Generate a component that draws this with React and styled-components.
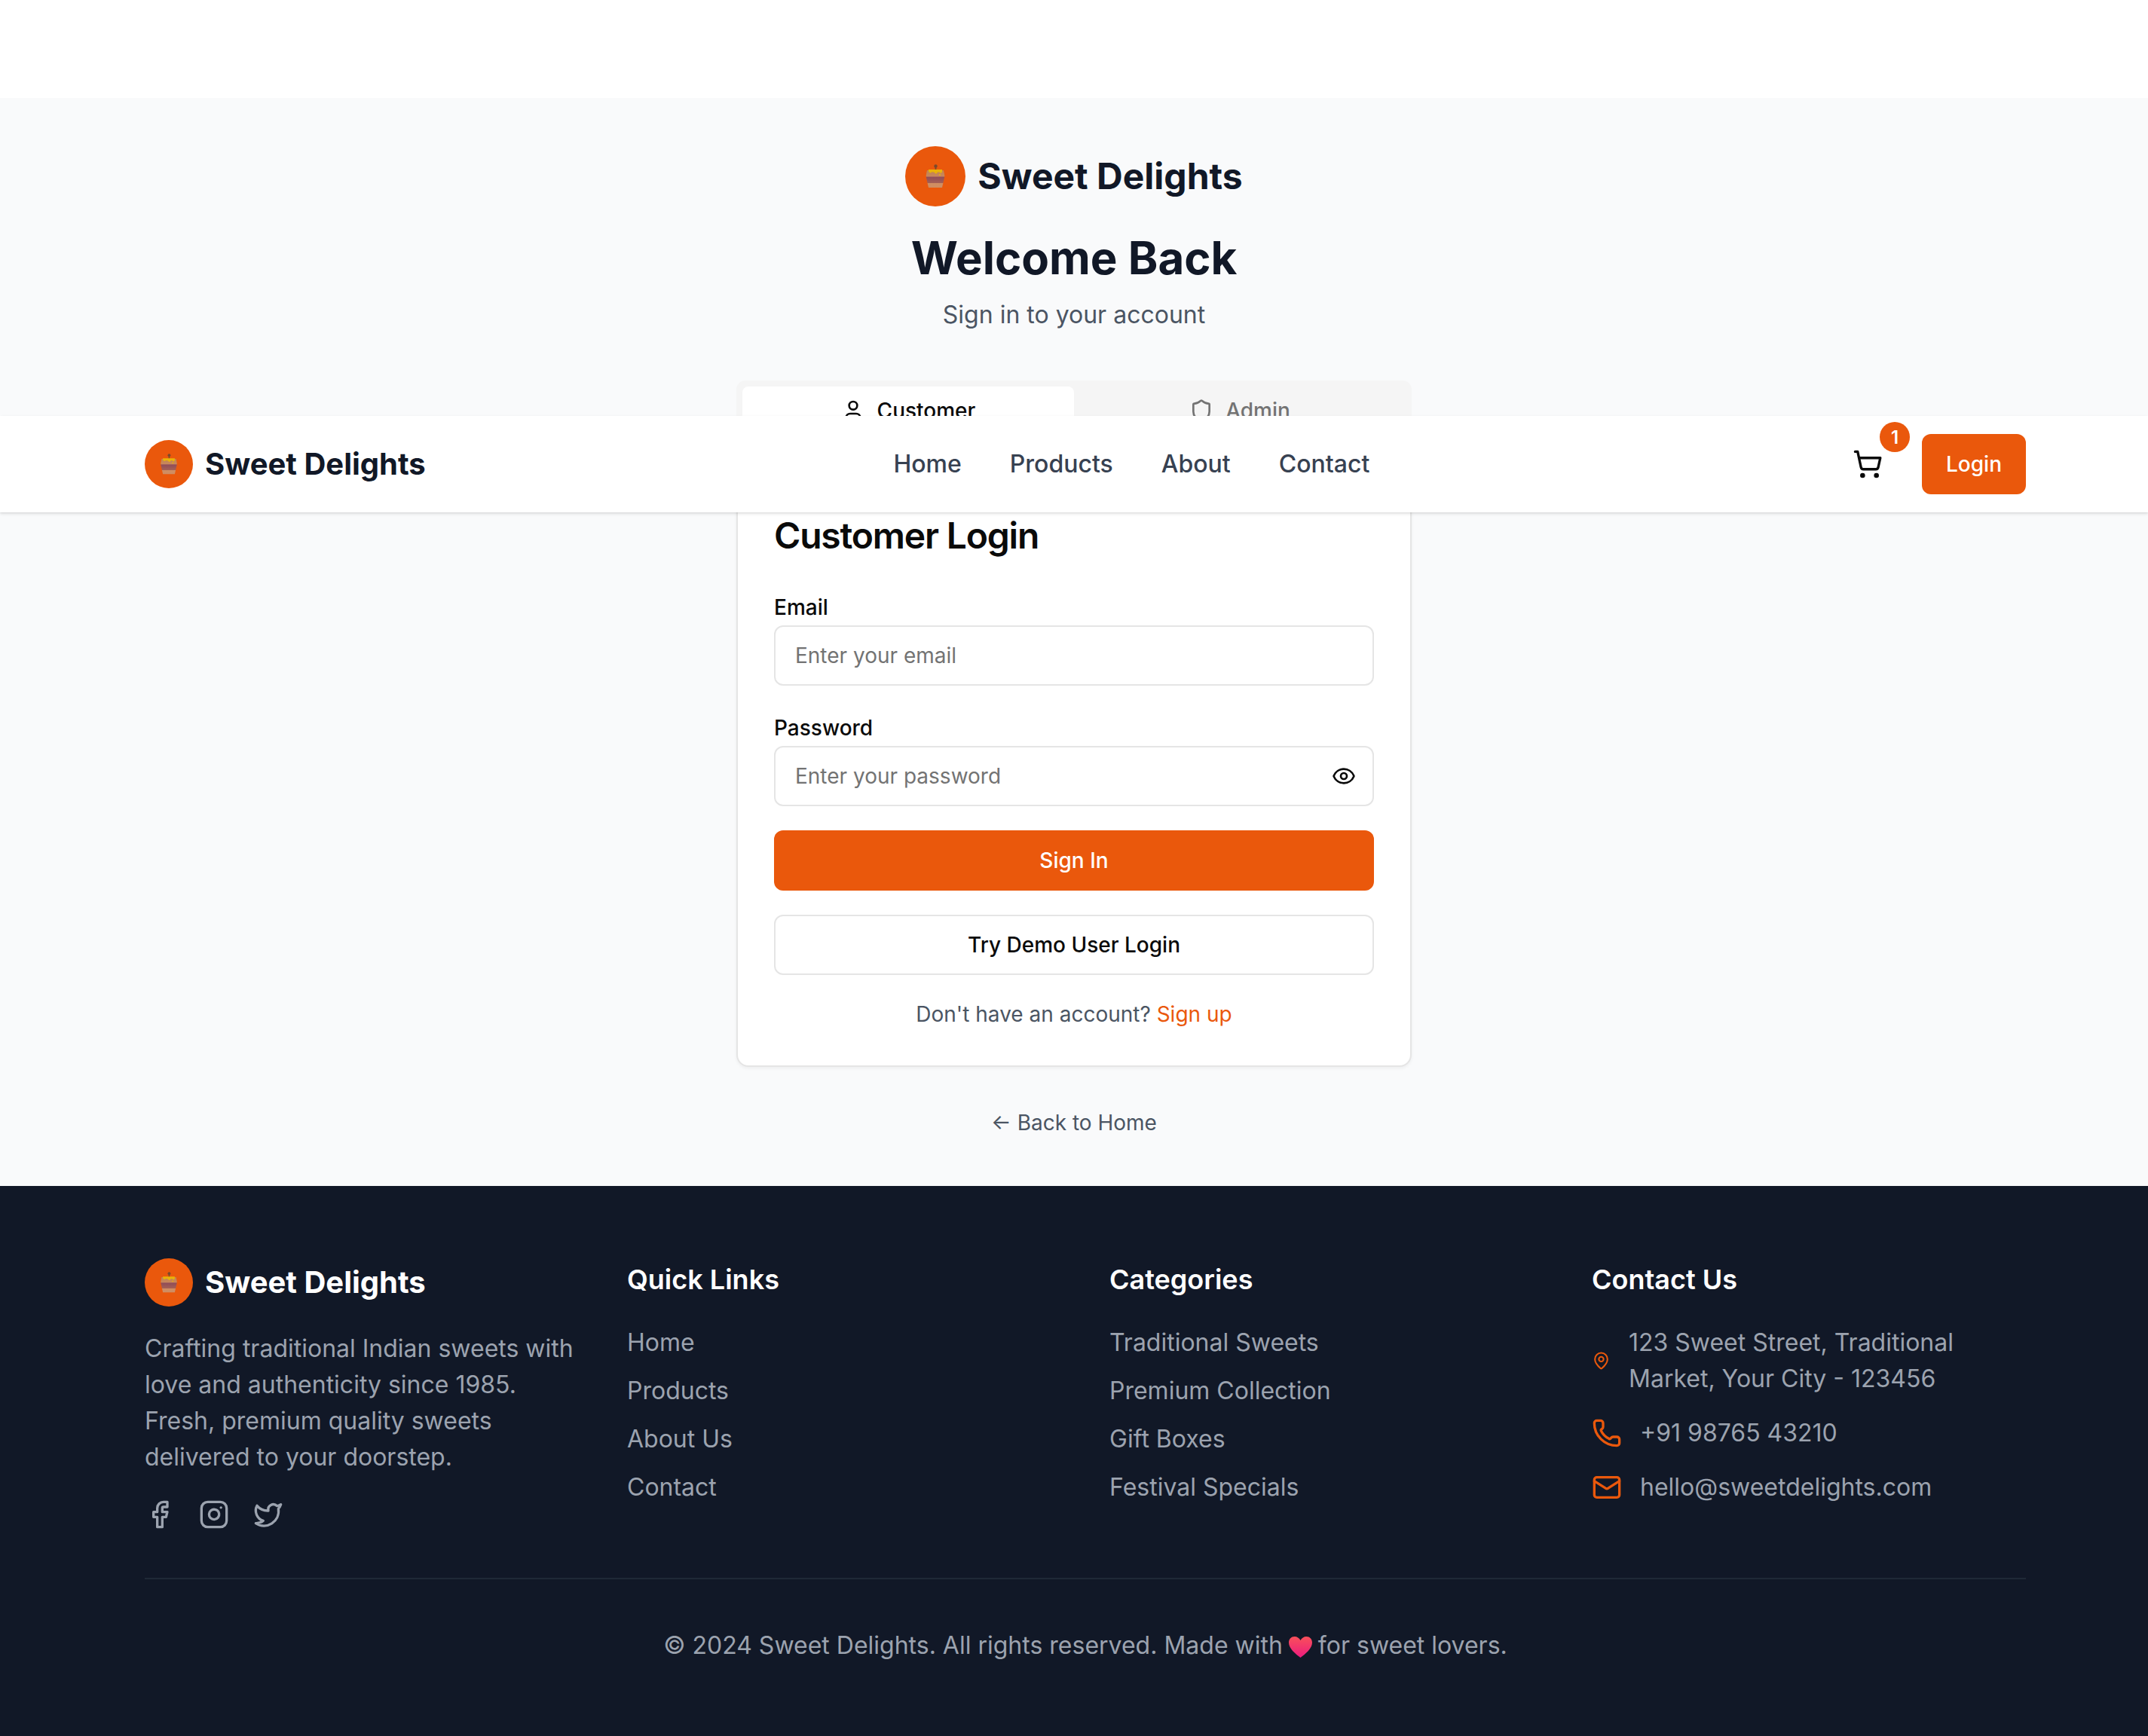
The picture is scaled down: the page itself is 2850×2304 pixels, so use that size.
import React from 'react';
import styled, { createGlobalStyle } from 'styled-components';
import { User, Shield, ShoppingCart, Eye, Facebook, Instagram, Twitter, MapPin, Phone, Mail } from 'lucide-react';

const Global = createGlobalStyle`
  * { box-sizing: border-box; }
  html, body { margin: 0; padding: 0; background: #fff; }
  body { font-family: Inter, "Noto Sans", sans-serif; color: #0a0a0a; }
  input::placeholder { color: #737373; opacity: 1; }
`;

const Page = styled.div`position: relative; padding-top: 130px; width: 2850px;`;

const NavBar = styled.nav`
  position: absolute; top: 552px; left: 0; right: 0; height: 128px; z-index: 10;
  background: #fff; box-shadow: 0 2px 4px rgba(0,0,0,.1), 0 1px 2px rgba(0,0,0,.06);
  padding: 0 162px 0 192px; display: flex; align-items: center; justify-content: space-between;
`;
const NavLinks = styled.div`display: flex; gap: 64px;`;
const NavLink = styled.a`font-size: 32px; line-height: 48px; font-weight: 500; color: #374151;`;
const NavRight = styled.div`display: flex; align-items: center; gap: 32px;`;
const CartButton = styled.div`position: relative; width: 80px; height: 80px; display: flex; align-items: center; justify-content: center; color: #0a0a0a;`;
const Badge = styled.span`
  position: absolute; top: -16px; right: -16px; width: 40px; height: 40px; border-radius: 50%;
  background: #ea580c; color: #fff; font-size: 24px; font-weight: 600; display: flex; align-items: center; justify-content: center;
`;
const LoginButton = styled.button`
  height: 80px; padding: 0 32px; border: 0; border-radius: 12px; background: #ea580c; color: #fff;
  font: 500 28px/40px Inter, sans-serif;
`;

const BrandRow = styled.div`display: flex; align-items: center; gap: 16px; justify-content: ${p => p.$center ? 'center' : 'flex-start'};`;
const LogoCircle = styled.div`
  width: ${p => p.$size}px; height: ${p => p.$size}px; border-radius: 50%; background: #ea580c; flex: none;
  display: flex; align-items: center; justify-content: center;
`;
const BrandName = styled.span`font-weight: 700; font-size: ${p => p.$size}px; line-height: ${p => p.$line}px; color: ${p => p.$light ? '#fff' : '#111827'};`;

const Main = styled.main`background: #f9fafb; height: 1444px; padding-top: 64px;`;
const Title = styled.h1`margin: 32px 0 0; text-align: center; font-size: 60px; line-height: 72px; font-weight: 700; color: #111827;`;
const Subtitle = styled.p`margin: 16px 0 0; text-align: center; font-size: 32px; line-height: 48px; color: #4b5563;`;
const Column = styled.div`width: 896px; margin: 63px auto 0;`;
const Tabs = styled.div`height: 80px; padding: 8px; border-radius: 12px; background: #f5f5f5; display: grid; grid-template-columns: 1fr 1fr;`;
const Tab = styled.div`
  height: 64px; border-radius: 8px; display: flex; align-items: center; justify-content: center; gap: 16px;
  font-size: 28px; line-height: 40px; font-weight: 500;
  background: ${p => p.$active ? '#fff' : 'transparent'}; color: ${p => p.$active ? '#0a0a0a' : '#737373'};
`;
const Card = styled.section`
  margin-top: 48px; padding: 50px 48px 48px; background: #fff; border: 2px solid #e5e5e5; border-radius: 16px;
  box-shadow: 0 2px 4px rgba(0,0,0,.05);
`;
const CardTitle = styled.h2`margin: 0 0 53px; font-size: 48px; line-height: 52px; font-weight: 600; letter-spacing: -1.2px; color: #0a0a0a;`;
const Field = styled.div`margin-bottom: ${p => p.$mb}px;`;
const Label = styled.label`display: block; margin-bottom: 8px; font-size: 28px; line-height: 32px; font-weight: 500; color: #0a0a0a;`;
const InputWrap = styled.div`position: relative;`;
const Input = styled.input`
  display: block; width: 100%; height: 80px; padding: 0 26px; border: 2px solid #e5e5e5; border-radius: 12px; background: #fff;
  font: 400 28px/40px Inter, sans-serif; color: #0a0a0a; outline: 0;
`;
const EyeSlot = styled.span`position: absolute; right: 24px; top: 24px; width: 32px; height: 32px; color: #0a0a0a; display: flex;`;
const Primary = styled.button`
  display: block; width: 100%; height: 80px; border: 0; border-radius: 12px; background: #ea580c; color: #fff;
  font: 500 28px/40px Inter, sans-serif;
`;
const Outline = styled.button`
  display: block; width: 100%; height: 80px; margin-top: 32px; border: 2px solid #e5e5e5; border-radius: 12px; background: #fff; color: #0a0a0a;
  font: 500 28px/40px Inter, sans-serif;
`;
const SignupLine = styled.p`margin: 32px 0 0; text-align: center; font-size: 28px; line-height: 40px; color: #4b5563;`;
const Accent = styled.a`color: #ea580c;`;
const BackLine = styled.p`margin: 54px 0 0; text-align: center; font-size: 28px; line-height: 40px; color: #4b5563;`;

const Footer = styled.footer`background: #111827; height: 730px; padding: 96px 162px 0 192px;`;
const FooterGrid = styled.div`display: grid; grid-template-columns: repeat(4, 576px); gap: 64px; height: 360px;`;
const FooterText = styled.p`margin: 32px 0 0; font-size: 32px; line-height: 48px; color: #9ca3af;`;
const Socials = styled.div`display: flex; gap: 32px; margin-top: 32px; color: #9ca3af;`;
const FooterHeading = styled.h3`margin: 0 0 32px; font-size: 36px; line-height: 56px; font-weight: 600; color: #fff;`;
const LinkList = styled.ul`list-style: none; margin: 0; padding: 0; display: flex; flex-direction: column; gap: 16px;`;
const FooterLink = styled.li`font-size: 32px; line-height: 48px; color: #9ca3af;`;
const ContactList = styled.div`display: flex; flex-direction: column; gap: 24px;`;
const ContactRow = styled.div`display: flex; align-items: center; gap: 24px; font-size: 32px; line-height: 48px; color: #9ca3af;`;
const PinIcon = styled(MapPin)`width: 25px; height: 40px; flex: none; color: #ea580c;`;
const Copyright = styled.div`
  margin-top: 64px; border-top: 2px solid #1f2937; padding-top: 64px; text-align: center; font-size: 32px; line-height: 48px; color: #9ca3af;
`;
const HeartIcon = styled.svg`display: inline-block; width: 33px; height: 29px; margin: 0 7px; vertical-align: -5px;`;

const Pot = ({ size, id }) => (
  <svg width={size} height={size} viewBox="0 0 32 32" aria-hidden="true">
    <defs>
      <linearGradient id={id} x1="0" y1="0" x2="0" y2="1">
        <stop offset="0" stopColor="#c2844f" />
        <stop offset=".36" stopColor="#c9875d" />
        <stop offset=".38" stopColor="#8f4c58" />
        <stop offset=".72" stopColor="#a35f56" />
        <stop offset=".74" stopColor="#d08e62" />
        <stop offset="1" stopColor="#cf8d62" />
      </linearGradient>
    </defs>
    <path d="M5 8 H27 L28 13 Q29 16 27.5 20 L25 31 H7 L4.5 20 Q3 16 4 13 Z" fill={`url(#${id})`} />
    <circle cx="16.5" cy="2.5" r="2.2" fill="#7a4a2c" />
    <rect x="15.6" y="3" width="1.8" height="5" fill="#7a4a2c" />
    <path d="M7 7 H25 V10 Q24 13 22 11 Q20 9.5 18.5 11 Q17 14 15 11 Q12 9.5 9.5 11.5 Q7.5 11 7 9 Z" fill="#eab308" />
    <circle cx="22" cy="14" r="1" fill="#eab308" />
  </svg>
);

const Brand = ({ circle, pot, size, line, light, center, id }) => (
  <BrandRow $center={center}>
    <LogoCircle $size={circle}><Pot size={pot} id={id} /></LogoCircle>
    <BrandName $size={size} $line={line} $light={light}>Sweet Delights</BrandName>
  </BrandRow>
);

export default function App() {
  return (
    <Page>
      <Global />
      <NavBar>
        <Brand circle={64} pot={28} size={40} line={56} id="pot-nav" />
        <NavLinks>
          <NavLink>Home</NavLink>
          <NavLink>Products</NavLink>
          <NavLink>About</NavLink>
          <NavLink>Contact</NavLink>
        </NavLinks>
        <NavRight>
          <CartButton>
            <ShoppingCart size={40} />
            <Badge>1</Badge>
          </CartButton>
          <LoginButton>Login</LoginButton>
        </NavRight>
      </NavBar>
      <Main>
        <Brand circle={80} pot={32} size={48} line={64} center id="pot-main" />
        <Title>Welcome Back</Title>
        <Subtitle>Sign in to your account</Subtitle>
        <Column>
          <Tabs>
            <Tab $active><User size={32} />Customer</Tab>
            <Tab><Shield size={32} />Admin</Tab>
          </Tabs>
          <Card>
            <CardTitle>Customer Login</CardTitle>
            <Field $mb={40}>
              <Label>Email</Label>
              <Input placeholder="Enter your email" />
            </Field>
            <Field $mb={32}>
              <Label>Password</Label>
              <InputWrap>
                <Input placeholder="Enter your password" />
                <EyeSlot><Eye size={32} /></EyeSlot>
              </InputWrap>
            </Field>
            <Primary>Sign In</Primary>
            <Outline>Try Demo User Login</Outline>
            <SignupLine>Don't have an account? <Accent>Sign up</Accent></SignupLine>
          </Card>
          <BackLine>← Back to Home</BackLine>
        </Column>
      </Main>
      <Footer>
        <FooterGrid>
          <div>
            <Brand circle={64} pot={28} size={40} line={56} light id="pot-foot" />
            <FooterText>Crafting traditional Indian sweets with love and authenticity since 1985. Fresh, premium quality sweets delivered to your doorstep.</FooterText>
            <Socials>
              <Facebook size={40} />
              <Instagram size={40} />
              <Twitter size={40} />
            </Socials>
          </div>
          <div>
            <FooterHeading>Quick Links</FooterHeading>
            <LinkList>
              <FooterLink>Home</FooterLink>
              <FooterLink>Products</FooterLink>
              <FooterLink>About Us</FooterLink>
              <FooterLink>Contact</FooterLink>
            </LinkList>
          </div>
          <div>
            <FooterHeading>Categories</FooterHeading>
            <LinkList>
              <FooterLink>Traditional Sweets</FooterLink>
              <FooterLink>Premium Collection</FooterLink>
              <FooterLink>Gift Boxes</FooterLink>
              <FooterLink>Festival Specials</FooterLink>
            </LinkList>
          </div>
          <div>
            <FooterHeading>Contact Us</FooterHeading>
            <ContactList>
              <ContactRow><PinIcon /><span>123 Sweet Street, Traditional Market, Your City - 123456</span></ContactRow>
              <ContactRow><Phone size={40} color="#ea580c" /><span>+91 98765 43210</span></ContactRow>
              <ContactRow><Mail size={40} color="#ea580c" /><span>hello@sweetdelights.com</span></ContactRow>
            </ContactList>
          </div>
        </FooterGrid>
        <Copyright>
          © 2024 Sweet Delights. All rights reserved. Made with
          <HeartIcon viewBox="0 0 33 29" aria-hidden="true">
            <defs>
              <linearGradient id="heart" x1="0" y1="0" x2="0" y2="1">
                <stop offset="0" stopColor="#f9505a" />
                <stop offset="1" stopColor="#ec1c7f" />
              </linearGradient>
            </defs>
            <path d="M16.5 29 C10 24 1 17 1 9 C1 4 4.5 1 8.5 1 C12 1 15 3 16.5 6 C18 3 21 1 24.5 1 C28.5 1 32 4 32 9 C32 17 23 24 16.5 29 Z" fill="url(#heart)" />
          </HeartIcon>
          for sweet lovers.
        </Copyright>
      </Footer>
    </Page>
  );
}
